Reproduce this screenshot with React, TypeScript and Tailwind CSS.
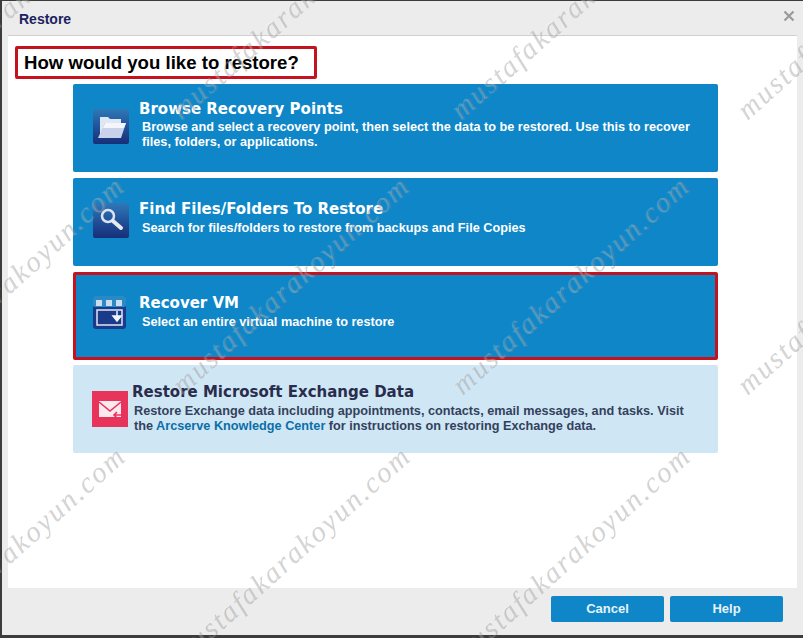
import type { ReactNode } from "react";

const SANS = "font-['Liberation_Sans',Arial,sans-serif]";

const WATERMARKS = [
  [-120, 103], [165, 103], [445, 103], [730, 103],
  [-120, 378], [165, 378], [445, 378], [730, 378],
  [-120, 648], [165, 648], [445, 648],
];

function IconTile({ children }: { children: ReactNode }) {
  return (
    <svg width="36" height="35" viewBox="0 0 36 35" className="shrink-0">
      <defs>
        <linearGradient id="tile" x1="0" y1="0" x2="0" y2="1">
          <stop offset="0" stopColor="#2f78b8" />
          <stop offset="0.55" stopColor="#1f4f97" />
          <stop offset="1" stopColor="#172f78" />
        </linearGradient>
      </defs>
      <rect width="36" height="35" rx="2" fill="url(#tile)" />
      {children}
    </svg>
  );
}

function FolderIcon() {
  return (
    <IconTile>
      <path d="M7 27V8h8l2 2h11v4H12L7 27z" fill="#dfe6f4" />
      <path d="M12 14h21l-5 15H5l7-15z" fill="#c9d2ea" />
      <path d="M12 14h21l-2 5H10l2-5z" fill="#f4f6fb" />
    </IconTile>
  );
}

function SearchIcon() {
  return (
    <IconTile>
      <circle cx="15" cy="13" r="6" fill="none" stroke="#dbe3ee" strokeWidth="2.5" />
      <path d="M20 18l8 7" stroke="#e6e9ef" strokeWidth="4" strokeLinecap="round" />
    </IconTile>
  );
}

function VmIcon() {
  return (
    <svg width="33" height="33" viewBox="0 0 33 33" className="shrink-0">
      <rect width="33" height="33" rx="3" fill="#1c3a8a" />
      <rect width="33" height="11" rx="2" fill="#2b89c4" />
      <rect x="3" y="4" width="6" height="6" fill="#c9dcf0" />
      <rect x="13" y="4" width="6" height="6" fill="#c9dcf0" />
      <rect x="23" y="4" width="6" height="6" fill="#c9dcf0" />
      <path d="M4 14h25v15H4z" fill="none" stroke="#dfe8f4" strokeWidth="1.5" />
      <path d="M24 15v7M20 20h8l-4 5z" fill="#f2f5fa" stroke="#f2f5fa" strokeWidth="1.5" />
    </svg>
  );
}

function MailIcon() {
  return (
    <svg width="36" height="36" viewBox="0 0 36 36" className="shrink-0">
      <rect width="36" height="36" fill="#e8345a" />
      <path d="M7 10h22v16H7z" fill="#fbe9ed" />
      <path d="M7 11l11 9 11-9" fill="none" stroke="#e8345a" strokeWidth="1.6" />
      <path d="M30 24h-8m3-3l-3 3 3 3" fill="none" stroke="#e8345a" strokeWidth="1.6" />
    </svg>
  );
}

type OptionCardProps = {
  icon: ReactNode;
  title: string;
  children: ReactNode;
  className: string;
  iconClass: string;
  descClass: string;
  light?: boolean;
};

function OptionCard({ icon, title, children, className, iconClass, descClass, light }: OptionCardProps) {
  return (
    <div
      className={`flex h-[88px] w-[645px] items-start rounded-[2px] ${
        light ? "bg-[#cfe6f4] text-[#2b2f4a]" : "bg-[#0e86c8] text-white"
      } ${className}`}
    >
      <div className={iconClass}>{icon}</div>
      <div className="min-w-0">
        <div
          className={`font-['DejaVu_Sans',sans-serif] text-[15px] leading-[18px] font-bold ${
            light ? "text-[#2a2c4d]" : ""
          }`}
        >
          {title}
        </div>
        <div
          className={`w-[560px] text-[12.7px] leading-[14.5px] font-bold ${SANS} ${descClass} ${
            light ? "pl-[2px] text-[#33415c]" : "pl-[3px]"
          }`}
        >
          {children}
        </div>
      </div>
    </div>
  );
}

export default function App() {
  return (
    <div className={`relative flex h-[638px] w-[803px] flex-col overflow-hidden bg-[#3c3c3c] ${SANS}`}>
      <div className="mt-px ml-[2px] flex h-[634px] w-[801px] flex-col bg-[#ececec]">
        <div className="flex h-[34px] shrink-0 items-center justify-between pt-[2px] pr-[8px] pl-[17px]">
          <span className="text-sm font-bold text-[#1c2260]">Restore</span>
          <svg width="12" height="12" viewBox="0 0 12 12" className="mb-[7px]">
            <path d="M1.5 1.5l9 9M10.5 1.5l-9 9" stroke="#9a9a9a" strokeWidth="2.2" />
          </svg>
        </div>
        <div className="ml-[6px] flex h-[553px] w-[789px] flex-col border-t border-[#cfcfcf] bg-white">
          <div className="mt-[10px] ml-[7px] flex h-[33px] w-[302px] items-center rounded-[2px] border-[3px] border-[#c5121f] pl-[6px]">
            <span className="text-[18.6px] font-bold whitespace-nowrap text-black">How would you like to restore?</span>
          </div>
          <div className="mt-[5px] ml-[65px] flex flex-col gap-[6px]">
            <OptionCard
              icon={<FolderIcon />}
              iconClass="mt-[9px] w-[46px]"
              descClass="mt-[2px]"
              className="pt-[16px] pl-5"
              title="Browse Recovery Points"
            >
              Browse and select a recovery point, then select the data to be restored. Use this to recover files,
              folders, or applications.
            </OptionCard>
            <OptionCard
              icon={<SearchIcon />}
              iconClass="mt-[3px] w-[46px]"
              descClass="mt-[3px]"
              className="pt-[22px] pl-5"
              title="Find Files/Folders To Restore"
            >
              Search for files/folders to restore from backups and File Copies
            </OptionCard>
            <OptionCard
              icon={<VmIcon />}
              iconClass="mt-[2px] w-[46px]"
              descClass="mt-[3px]"
              className="border-[3px] border-[#c5121f] pt-[19px] pl-[17px]"
              title="Recover VM"
            >
              Select an entire virtual machine to restore
            </OptionCard>
            <OptionCard
              icon={<MailIcon />}
              iconClass="mt-[8px] w-[40px]"
              descClass="mt-[3px]"
              className="-mt-px pt-[18px] pl-[19px]"
              title="Restore Microsoft Exchange Data"
              light
            >
              Restore Exchange data including appointments, contacts, email messages, and tasks. Visit the{" "}
              <span className="text-[#0b6fa8]">Arcserve Knowledge Center</span> for instructions on restoring Exchange
              data.
            </OptionCard>
          </div>
        </div>
        <div className="flex flex-1 items-start justify-end gap-[6px] pt-[8px] pr-[20px]">
          <button className="h-[26px] w-[113px] rounded-[2px] bg-[#0e86c8] text-[13px] font-bold text-[#e6f2fa]">
            Cancel
          </button>
          <button className="h-[26px] w-[113px] rounded-[2px] bg-[#0e86c8] text-[13px] font-bold text-[#e6f2fa]">
            Help
          </button>
        </div>
      </div>
      {WATERMARKS.map(([x, y]) => (
        <div
          key={`${x}-${y}`}
          className="pointer-events-none absolute origin-top-left -rotate-[42deg] font-['Liberation_Serif',serif] text-[29px] leading-none tracking-[2px] whitespace-nowrap text-white/20 italic [text-shadow:1px_1px_0_rgba(130,130,130,0.4)]"
          style={{ left: x, top: y }}
        >
          mustafakarakoyun.com
        </div>
      ))}
    </div>
  );
}
